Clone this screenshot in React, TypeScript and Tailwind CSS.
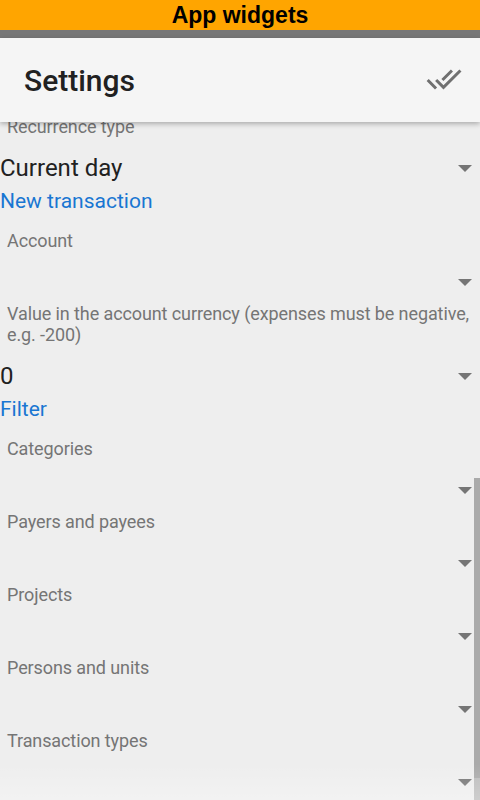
import React from 'react';

// Champs du widget : libellé + spinner (valeur optionnelle)
interface Field {
  label: string;
  value?: string;
}

const filterFields: Field[] = [
  { label: 'Categories' },
  { label: 'Payers and payees' },
  { label: 'Projects' },
  { label: 'Persons and units' },
  { label: 'Transaction types' },
];

function Triangle() {
  return (
    <div className="w-0 h-0 border-l-[7px] border-r-[7px] border-t-[7px] border-l-transparent border-r-transparent border-t-[#757575]" />
  );
}

function Label({ children }: { children: React.ReactNode }) {
  return <div className="pl-[7px] text-[18px] leading-[21px] tracking-[-0.1px] text-[#757575]">{children}</div>;
}

function Spinner({ value }: { value?: string }) {
  return (
    <div className="h-[52px] pt-[10px] pr-[8px] flex items-center justify-between">
      <span className="text-[24px] leading-[28px] text-[#212121]">{value ?? ''}</span>
      <Triangle />
    </div>
  );
}

function SectionTitle({ children }: { children: React.ReactNode }) {
  return <div className="h-[24px] mb-[17px] text-[21px] leading-[24px] text-[#1976d2]">{children}</div>;
}

export default function App() {
  return (
    <div className="w-[480px] h-[800px] overflow-hidden flex flex-col bg-[#eeeeee] font-['Roboto',sans-serif]">
      <div className="h-[30px] shrink-0 bg-[#ffa500] text-center text-[23px] leading-[31px] font-bold text-black font-['Liberation_Sans',Arial,sans-serif]">
        App widgets
      </div>
      <div className="h-[8px] shrink-0 bg-[#777777]" />
      <div className="relative z-10 h-[84px] shrink-0 bg-[#f5f5f5] shadow-[0_2px_5px_rgba(0,0,0,0.28)] flex items-center justify-between pl-[24px] pr-[18px]">
        <span className="text-[30px] font-medium text-[#212121]">Settings</span>
        <svg width="36" height="36" viewBox="0 0 24 24" className="mt-[-3px]">
          <path
            fill="#707070"
            d="M18 7l-1.41-1.41-6.34 6.34 1.41 1.41L18 7zm4.24-1.41L11.66 16.17 7.48 12l-1.41 1.41L11.66 19l12-12-1.42-1.41zM.41 13.41L6 19l1.41-1.41L1.83 12 .41 13.41z"
          />
        </svg>
      </div>
      <div className="relative flex-1 overflow-hidden">
        <div className="mt-[-6px]">
          <Label>Recurrence type</Label>
          <Spinner value="Current day" />
          <SectionTitle>New transaction</SectionTitle>
          <Label>Account</Label>
          <Spinner />
          <Label>Value in the account currency (expenses must be negative, e.g. -200)</Label>
          <Spinner value="0" />
          <SectionTitle>Filter</SectionTitle>
          {filterFields.map((f) => (
            <div key={f.label}>
              <Label>{f.label}</Label>
              <Spinner value={f.value} />
            </div>
          ))}
        </div>
        {/* barre de défilement */}
        <div className="absolute right-0 top-[356px] w-[6px] h-[300px] bg-[#aaaaaa]" />
        <div className="absolute right-0 top-[656px] w-[6px] h-[22px] bg-[#bdbdbd]" />
        <div className="absolute left-0 right-0 bottom-0 h-[36px] bg-gradient-to-b from-transparent to-[rgba(255,255,255,0.25)]" />
      </div>
    </div>
  );
}
